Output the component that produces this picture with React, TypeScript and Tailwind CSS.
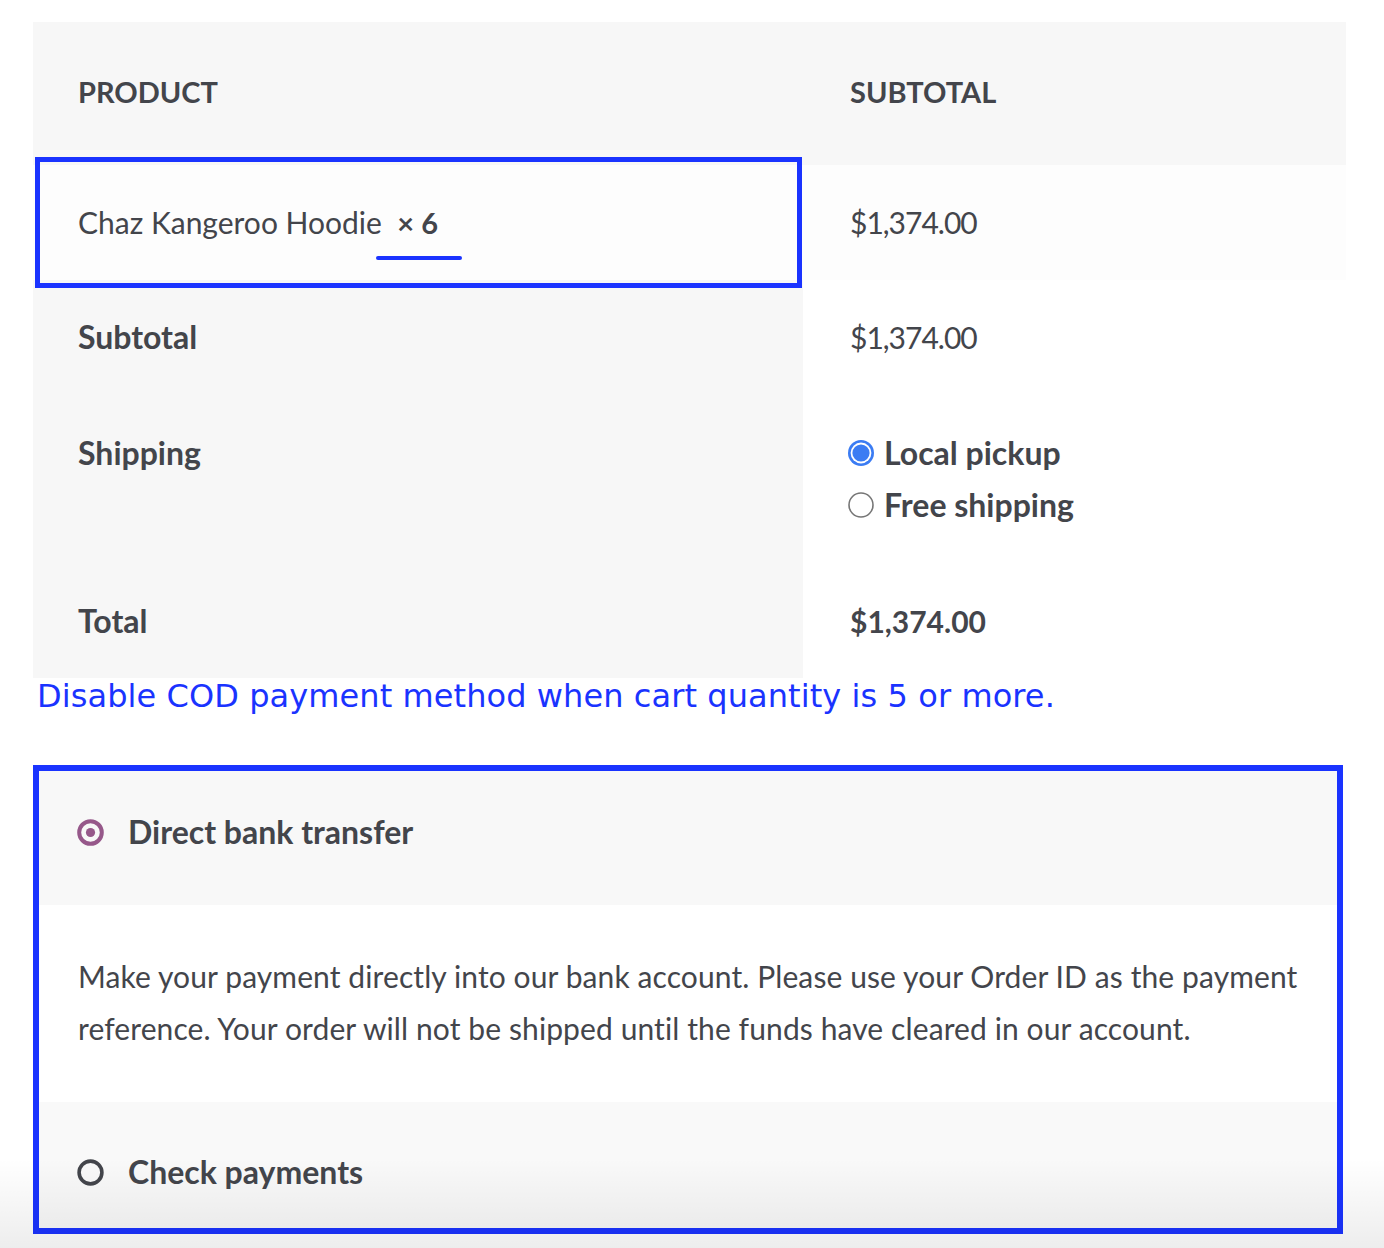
import React from "react";

function RadioChecked() {
  return (
    <svg width="26" height="26" viewBox="0 0 26 26" className="shrink-0">
      <circle cx="13" cy="13" r="13" fill="#3b7cf3" />
      <circle cx="13" cy="13" r="10.4" fill="#ffffff" />
      <circle cx="13" cy="13" r="8.6" fill="#3b7cf3" />
    </svg>
  );
}

function RadioEmpty() {
  return (
    <svg width="26" height="26" viewBox="0 0 26 26" className="shrink-0">
      <circle cx="13" cy="13" r="12" fill="#ffffff" stroke="#767676" strokeWidth="1.6" />
    </svg>
  );
}

function DotCircle() {
  return (
    <svg width="27" height="27" viewBox="0 0 27 27" className="shrink-0">
      <circle cx="13.5" cy="13.5" r="11.3" fill="none" stroke="#96588a" strokeWidth="4" />
      <circle cx="13.5" cy="13.5" r="4.6" fill="#96588a" />
    </svg>
  );
}

function CircleO() {
  return (
    <svg width="27" height="27" viewBox="0 0 27 27" className="shrink-0">
      <circle cx="13.5" cy="13.5" r="11.4" fill="none" stroke="#43454b" strokeWidth="3.6" />
    </svg>
  );
}

export default function App() {
  return (
    <div className="relative h-[1248px] w-[1384px] overflow-hidden bg-white text-[#43454b] font-['Lato',sans-serif] text-[32px] leading-[52px]">
      <div className="pt-[22px] pl-[33px]">
        {/* Order table */}
        <div className="w-[1313px]">
          <div className="grid h-[143px] grid-cols-[770px_543px] bg-[#f7f7f7] font-bold uppercase text-[29px]">
            <div className="pl-[45px] pt-[44px]">Product</div>
            <div className="pl-[47px] pt-[44px]">Subtotal</div>
          </div>

          <div className="relative grid h-[115px] grid-cols-[770px_543px] bg-[#fdfdfd]">
            <div className="pl-[45px] pt-[31px] whitespace-pre text-[30px]">
              Chaz Kangeroo Hoodie{"\u00a0 "}
              <strong className="font-bold text-[29px]">×{"\u00a0"}6</strong>
            </div>
            <div className="pl-[47px] pt-[31px] text-[30px] tracking-[-1px]">$1,374.00</div>

            {/* annotation box */}
            <div className="pointer-events-none absolute left-[2px] top-[-8px] h-[131px] w-[767px] border-[5px] border-[#1a33ff]" />
            <div className="pointer-events-none absolute left-[343px] top-[91px] h-[4px] w-[86px] rounded-full bg-[#1a33ff]" />
          </div>

          <div className="grid h-[115px] grid-cols-[770px_543px]">
            <div className="bg-[#f7f7f7] pl-[45px] pt-[31px] font-bold">Subtotal</div>
            <div className="bg-white pl-[47px] pt-[31px] text-[30px] tracking-[-1px]">$1,374.00</div>
          </div>

          <div className="grid h-[169px] grid-cols-[770px_543px]">
            <div className="bg-[#f7f7f7] pl-[45px] pt-[32px] font-bold">Shipping</div>
            <div className="flex flex-col bg-white pl-[45px] pt-[32px] font-bold">
              <div className="flex items-center gap-[10px]">
                <RadioChecked />
                <span>Local pickup</span>
              </div>
              <div className="flex items-center gap-[10px]">
                <RadioEmpty />
                <span>Free shipping</span>
              </div>
            </div>
          </div>

          <div className="grid h-[114px] grid-cols-[770px_543px]">
            <div className="bg-[#f7f7f7] pl-[45px] pt-[31px] font-bold">Total</div>
            <div className="bg-white pl-[47px] pt-[31px] font-bold text-[30px]">$1,374.00</div>
          </div>
        </div>

        {/* Annotation text */}
        <div className="pl-[4px] font-['DejaVu_Sans',sans-serif] text-[32px] leading-[36px] tracking-[0.08px] text-[#1a33ff] whitespace-nowrap">
          Disable COD payment method when cart quantity is 5 or more.
        </div>

        {/* Payment methods */}
        <div className="mt-[51px] w-[1310px] border-[6px] border-[#1a33ff]">
          <div className="flex h-[134px] items-start gap-[24px] bg-[#f8f8f8] pl-[38px] pt-[35px] font-bold">
            <div className="flex h-[52px] items-center">
              <DotCircle />
            </div>
            <span>Direct bank transfer</span>
          </div>
          <div className="h-[197px] whitespace-nowrap bg-white pl-[39px] pt-[45px] text-[30px] tracking-[0.1px]">
            Make your payment directly into our bank account. Please use your Order ID as the payment
            <br />
            reference. Your order will not be shipped until the funds have cleared in our account.
          </div>
          <div className="flex h-[126px] items-start gap-[24px] bg-[#f9f9f9] pl-[38px] pt-[44px] font-bold">
            <div className="flex h-[52px] items-center">
              <CircleO />
            </div>
            <span>Check payments</span>
          </div>
        </div>
      </div>

      {/* bottom shade */}
      <div className="pointer-events-none absolute bottom-0 left-0 right-0 h-[90px] bg-gradient-to-b from-transparent to-black/[0.07]" />
    </div>
  );
}
